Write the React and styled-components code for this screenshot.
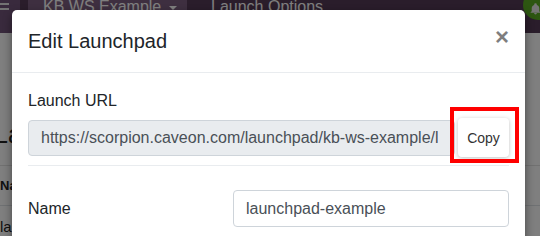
import React from 'react';
import styled, { createGlobalStyle } from 'styled-components';

const GlobalStyle = createGlobalStyle`
  html, body {
    margin: 0;
    padding: 0;
    overflow: hidden;
  }
  body {
    font-family: "Liberation Sans", Arial, sans-serif;
    color: #212529;
  }
  * {
    box-sizing: border-box;
  }
`;

const Page = styled.div`
  position: relative;
  width: 540px;
  height: 236px;
  overflow: hidden;
  background: #fff;
`;

const Navbar = styled.div`
  display: flex;
  align-items: stretch;
  height: 33px;
  background: #553a57;
`;

const MenuToggle = styled.div`
  width: 20px;
  background: #73557a;
  display: flex;
  align-items: flex-start;
`;

const BrandButton = styled.div`
  display: flex;
  align-items: flex-start;
  gap: 8px;
  margin-left: 8px;
  width: 159px;
  padding: 0 0 0 15px;
  background: #7c5f80;
  color: #fff;
  font-size: 16px;
  line-height: 1;
  margin-top: -1px;
`;

const Caret = styled.span`
  margin-top: 7px;
  width: 0;
  height: 0;
  border-left: 4px solid transparent;
  border-right: 4px solid transparent;
  border-top: 4px solid #fff;
`;

const NavLink = styled.div`
  margin-left: 24px;
  margin-top: -1px;
  color: #fff;
  font-size: 16px;
  line-height: 1;
`;

const BellBadge = styled.div`
  margin-left: auto;
  margin-right: -13px;
  margin-top: -10px;
  width: 30px;
  height: 30px;
  border-radius: 50%;
  background: #5aac22;
  display: flex;
  align-items: center;
  justify-content: center;
  padding: 8px 6px 0 0;
`;

const Content = styled.div`
  margin-left: -6px;
`;

const PageTitle = styled.div`
  font-size: 25px;
  line-height: 30px;
  padding-top: 86px;
  color: #222;
`;

const TableRow = styled.div`
  border-top: 1px solid ${(p) => (p.$strong ? '#dee2e6' : '#e3e3e3')};
  padding: ${(p) => (p.$head ? '12px 0 12px 6px' : '12px 0 0 6px')};
  font-size: ${(p) => (p.$head ? '13px' : '15px')};
  font-weight: ${(p) => (p.$head ? 700 : 400)};
  color: #222;
  margin-top: ${(p) => p.$offset || 0}px;
`;

const Backdrop = styled.div`
  position: absolute;
  inset: 0;
  background: rgba(0, 0, 0, 0.5);
`;

const ModalLayer = styled.div`
  position: absolute;
  inset: 0;
  padding: 10px 15px 0 12px;
`;

const Modal = styled.div`
  position: relative;
  background: #fff;
  border-radius: 5px;
  box-shadow: 0 4px 10px rgba(0, 0, 0, 0.45);
  height: 260px;
`;

const ModalHeader = styled.div`
  display: flex;
  align-items: flex-start;
  padding: 16px;
  border-bottom: 1px solid #e9ecef;
`;

const ModalTitle = styled.h5`
  margin: 0;
  font-size: 20px;
  font-weight: 400;
  line-height: 30px;
  color: #212529;
`;

const CloseButton = styled.button`
  margin-left: auto;
  padding: 0;
  border: 0;
  background: transparent;
  font-family: "Liberation Sans", Arial, sans-serif;
  font-size: 24px;
  font-weight: 700;
  line-height: 24px;
  color: #000;
  opacity: 0.5;
  margin-top: -1px;
`;

const ModalBody = styled.div`
  padding: 16px;
`;

const FieldLabel = styled.label`
  display: block;
  font-size: 16px;
  line-height: 24px;
  margin-bottom: 5px;
  color: #212529;
`;

const InputGroup = styled.div`
  position: relative;
  display: flex;
  align-items: center;
  gap: 3px;
  padding-bottom: 8px;
  border-bottom: 1px solid #e9ecef;
`;

const TextInput = styled.div`
  flex: ${(p) => (p.$grow ? 1 : 'initial')};
  min-width: 0;
  height: ${(p) => p.$height || 36}px;
  display: flex;
  align-items: center;
  padding: 0 ${(p) => (p.$grow ? 16 : 12)}px 0 12px;
  font-size: 16px;
  color: #495057;
  background: ${(p) => (p.$readOnly ? '#e9ecef' : '#fff')};
  border: 1px solid #ced4da;
  border-radius: 4px;
`;

const InputValue = styled.span`
  display: block;
  min-width: 0;
  white-space: nowrap;
  overflow: hidden;
`;

const CopyButton = styled.button`
  flex: none;
  width: 51px;
  height: 39px;
  border: 0;
  border-radius: 4px;
  background: #fff;
  box-shadow: 0 1px 4px rgba(0, 0, 0, 0.25);
  font-family: "Liberation Sans", Arial, sans-serif;
  font-size: 14px;
  color: #333;
  padding: 0;
`;

const Highlight = styled.div`
  position: absolute;
  right: -10px;
  top: -11px;
  width: 69px;
  height: 56px;
  border: 4px solid #ff0000;
  pointer-events: none;
`;

const FormRow = styled.div`
  display: grid;
  grid-template-columns: 205px 1fr;
  align-items: center;
  margin-top: 24px;
`;

const RowLabel = styled.div`
  font-size: 16px;
  color: #212529;
`;

const Hamburger = () => (
  <svg width="10" height="14" viewBox="0 0 10 14" style={{ marginTop: '-2px' }}>
    <rect x="0" y="0" width="9" height="2" fill="#e6e6e6" />
    <rect x="0" y="5" width="9" height="2" fill="#e6e6e6" />
    <rect x="0" y="10" width="9" height="2" fill="#e6e6e6" />
  </svg>
);

const Bell = () => (
  <svg width="13" height="14" viewBox="0 0 24 24" fill="#e8e8e8">
    <path d="M12 22a2.5 2.5 0 0 0 2.5-2.5h-5A2.5 2.5 0 0 0 12 22zm7-6V11c0-3.1-1.6-5.6-4.5-6.3V4a2.5 2.5 0 0 0-5 0v.7C6.6 5.4 5 7.9 5 11v5l-2 2v1h18v-1l-2-2z" />
  </svg>
);

const App = () => {
  return (
    <>
      <GlobalStyle />
      <Page>
        <Navbar>
          <MenuToggle>
            <Hamburger />
          </MenuToggle>
          <BrandButton>
            KB WS Example <Caret />
          </BrandButton>
          <NavLink>Launch Options</NavLink>
          <BellBadge>
            <Bell />
          </BellBadge>
        </Navbar>
        <Content>
          <PageTitle>Launchpads</PageTitle>
          <TableRow $head $offset={16}>Name</TableRow>
          <TableRow $strong>launchpad-example</TableRow>
        </Content>

        <Backdrop />

        <ModalLayer>
          <Modal>
            <ModalHeader>
              <ModalTitle>Edit Launchpad</ModalTitle>
              <CloseButton aria-label="Close">×</CloseButton>
            </ModalHeader>
            <ModalBody>
              <FieldLabel>Launch URL</FieldLabel>
              <InputGroup>
                <TextInput $grow $readOnly>
                  <InputValue>https://scorpion.caveon.com/launchpad/kb-ws-example/launchpad-example</InputValue>
                </TextInput>
                <CopyButton>Copy</CopyButton>
                <Highlight />
              </InputGroup>
              <FormRow>
                <RowLabel>Name</RowLabel>
                <TextInput $height={37}>
                  <InputValue>launchpad-example</InputValue>
                </TextInput>
              </FormRow>
            </ModalBody>
          </Modal>
        </ModalLayer>
      </Page>
    </>
  );
};

export default App;
